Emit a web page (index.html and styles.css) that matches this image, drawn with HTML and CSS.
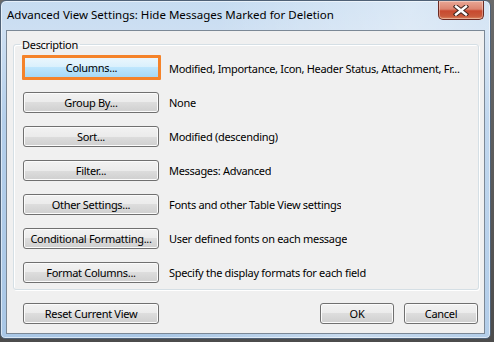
FILE: index.html
```html
<!DOCTYPE html>
<html>
<head>
<meta charset="utf-8">
<link rel="stylesheet" href="styles.css">
</head>
<body>
<div class="window">
  <div class="titlebar">
    <span class="title">Advanced View Settings: Hide Messages Marked for Deletion</span>
    <div class="close">
      <svg width="16" height="11" viewBox="0 0 16 11">
        <path d="M3 1.5 L13 9.5 M13 1.5 L3 9.5" stroke="#40261f" stroke-width="4.4" stroke-linecap="square"/>
        <path d="M3 1.5 L13 9.5 M13 1.5 L3 9.5" stroke="#ffffff" stroke-width="2.4" stroke-linecap="square"/>
      </svg>
    </div>
  </div>
  <div class="client">
    <fieldset class="group">
      <legend>Description</legend>
      <div class="row"><button class="btn focus">Columns...</button><span class="desc">Modified, Importance, Icon, Header Status, Attachment, Fr...</span></div>
      <div class="row"><button class="btn">Group By...</button><span class="desc">None</span></div>
      <div class="row"><button class="btn">Sort...</button><span class="desc">Modified (descending)</span></div>
      <div class="row"><button class="btn">Filter...</button><span class="desc">Messages: Advanced</span></div>
      <div class="row"><button class="btn">Other Settings...</button><span class="desc">Fonts and other Table View settings</span></div>
      <div class="row"><button class="btn">Conditional Formatting...</button><span class="desc">User defined fonts on each message</span></div>
      <div class="row"><button class="btn">Format Columns...</button><span class="desc">Specify the display formats for each field</span></div>
    </fieldset>
    <div class="footer">
      <button class="btn">Reset Current View</button>
      <div class="spacer"></div>
      <button class="btn small">OK</button>
      <button class="btn small">Cancel</button>
    </div>
  </div>
</div>
</body>
</html>
```
FILE: styles.css
```css
html, body {
  margin: 0;
  padding: 0;
}
body {
  width: 494px;
  height: 342px;
  background: linear-gradient(to bottom, #6a6a6a, #4c4c4c);
  font-family: "Noto Sans", "Open Sans", sans-serif;
  font-size: 11px;
  letter-spacing: -0.3px;
  color: #000;
  overflow: hidden;
}
.window {
  width: 491px;
  height: 339px;
  box-sizing: border-box;
  border: 1px solid #4f6176;
  border-radius: 6px 6px 5px 5px;
  padding: 0 5px 4px 5px;
  background:
    linear-gradient(100deg, rgba(255,255,255,0) 40%, rgba(255,255,255,0.35) 75%, rgba(255,255,255,0.1) 100%),
    linear-gradient(to bottom, #c6dcf1 0px, #cddff2 30px, #b4cfeb 120px, #a9c7e6 339px);
  box-shadow: inset 0 0 0 1px rgba(255,255,255,0.55);
  display: flex;
  flex-direction: column;
}
.titlebar {
  height: 29px;
  display: flex;
  justify-content: space-between;
  align-items: flex-start;
  flex: none;
}
.title {
  padding: 6px 0 0 1px;
  line-height: 16px;
  font-size: 11.5px;
  letter-spacing: 0;
  color: #000;
  white-space: nowrap;
}
.close {
  width: 46px;
  height: 19px;
  margin-right: 1px;
  box-sizing: border-box;
  border: 1px solid #6b2a22;
  border-top: none;
  border-radius: 0 0 5px 5px;
  background: linear-gradient(to bottom, #e9a795 0%, #dc8470 45%, #c8492f 55%, #c95a3c 85%, #e08a62 100%);
  box-shadow: inset 0 0 0 1px rgba(255,255,255,0.35);
  display: flex;
  align-items: center;
  justify-content: center;
}
.client {
  flex: none;
  height: 304px;
  box-sizing: border-box;
  border: 1px solid #7b8896;
  background: #f0f0f0;
  padding: 6px 5px 0 6px;
}
.group {
  margin: 0;
  min-width: 0;
  padding: 6px 9px 6px 9px;
  border: 1px solid #d5dfe5;
  border-radius: 3px;
  box-shadow: 1px 1px 0 #ffffff, inset 1px 1px 0 #ffffff;
  display: flex;
  flex-direction: column;
  gap: 13px;
}
.group legend {
  margin-left: -3px;
  padding: 0 2px;
  line-height: 15px;
  font-size: 11px;
}
.row {
  display: flex;
  align-items: center;
  height: 21px;
  min-width: 0;
}
.btn {
  width: 136px;
  height: 21px;
  box-sizing: border-box;
  padding: 0;
  border: 1px solid #707070;
  border-radius: 3px;
  background: linear-gradient(to bottom, #f2f2f2 0%, #ebebeb 50%, #dddddd 50%, #cfcfcf 100%);
  box-shadow: inset 0 0 0 1px #fbfbfb;
  font-family: inherit;
  font-size: 11px;
  letter-spacing: inherit;
  color: #000;
  line-height: 17px;
  text-align: center;
  white-space: nowrap;
  flex: none;
}
.btn.focus {
  width: 139px;
  height: 25px;
  margin: -3px 0 -1px -1px;
  border: 3px solid #f5832a;
  border-radius: 1px;
  background: linear-gradient(to bottom, #eaf6fd 0%, #d9f0fc 50%, #bee6fd 50%, #a7d9f5 100%);
  box-shadow: none;
}
.desc {
  margin-left: 10px;
  font-size: 11px;
  white-space: nowrap;
  overflow: hidden;
  min-width: 0;
}
.row:first-of-type .desc {
  margin-left: 8px;
}
.footer {
  display: flex;
  align-items: center;
  margin-top: 13px;
  padding: 0 1px 0 10px;
  gap: 10px;
}
.spacer {
  flex: 1;
}
.btn.small {
  width: 74px;
}
```
